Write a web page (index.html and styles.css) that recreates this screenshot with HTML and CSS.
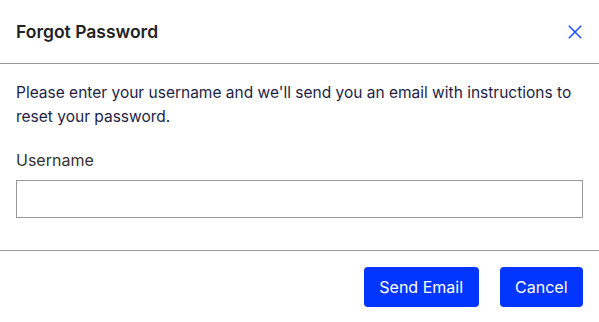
FILE: index.html
```html
<!DOCTYPE html>
<html lang="en">
<head>
    <meta charset="UTF-8">
    <meta name="viewport" content="width=device-width, initial-scale=1.0">
    <title>Forgot Password</title>
    <link rel="stylesheet" href="styles.css">
</head>
<body>
    <div class="dialog">
        <div class="dialog-header">
            <h2 class="dialog-title">Forgot Password</h2>
            <button class="close-btn" aria-label="Close">
                <svg width="14" height="14" viewBox="0 0 14 14"><path d="M0.8 0.8 L13.2 13.2 M13.2 0.8 L0.8 13.2" stroke="#1a4cff" stroke-width="1.5" fill="none"/></svg>
            </button>
        </div>
        <div class="dialog-body">
            <p class="intro">Please enter your username and we'll send you an email with instructions to reset your password.</p>
            <label class="field-label" for="username">Username</label>
            <input class="field-input" id="username" type="text">
        </div>
        <div class="dialog-footer">
            <button class="button">Send Email</button>
            <button class="button">Cancel</button>
        </div>
    </div>
</body>
</html>
```

FILE: styles.css
```css
body { margin: 0; padding: 0; background: #fff; font-family: 'Inter', 'Liberation Sans', sans-serif; }
.dialog { width: 599px; }
.dialog-header { display: flex; align-items: center; justify-content: space-between; height: 63px; padding: 0 17px 0 16px; border-bottom: 1px solid #999; }
.dialog-title { margin: 0; font-size: 17.5px; font-weight: 600; color: #222; }
.close-btn { background: none; border: none; padding: 0; cursor: pointer; display: flex; }

.dialog-body { padding: 17px 16px 32px; border-bottom: 1px solid #999; }
.intro { margin: 0 0 19px; font-size: 15.5px; line-height: 24px; color: #1e1e44; }
.field-label { display: block; font-size: 16px; line-height: 24px; color: #333; margin-bottom: 8px; }
.field-input { display: block; box-sizing: border-box; width: 100%; height: 38px; border: 1px solid #999; border-radius: 0; font-size: 16px; padding: 0 10px; }

.dialog-footer { display: flex; justify-content: flex-end; gap: 21px; padding: 16px 16px 16px; }
.button { height: 40px; padding: 0 15.5px; background-color: #0036ff; color: #fff; font-family: inherit; font-size: 16px; border: none; border-radius: 4px; cursor: pointer; }
```
